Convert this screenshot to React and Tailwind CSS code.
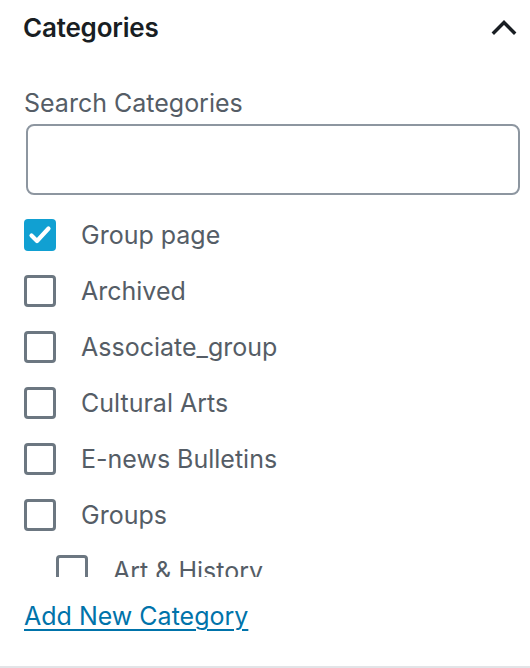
import React from "react";

const items = [
  { label: "Group page", checked: true },
  { label: "Archived" },
  { label: "Associate_group" },
  { label: "Cultural Arts" },
  { label: "E-news Bulletins" },
  { label: "Groups" },
  { label: "Art & History", nested: true },
  { label: "Education", nested: true },
];

function Box({ checked }) {
  if (checked) {
    return (
      <span className="flex h-[32px] w-[32px] shrink-0 items-center justify-center rounded-[4px] bg-[#11a0d2]">
        <svg width="26" height="26" viewBox="0 0 26 26" fill="none">
          <path d="M4.5 13.5l5.5 5.5L21.5 6.5" stroke="#fff" strokeWidth="4.2" strokeLinecap="round" strokeLinejoin="round" />
        </svg>
      </span>
    );
  }
  return <span className="block h-[32px] w-[32px] shrink-0 rounded-[4px] border-[3px] border-[#6c7781] bg-white" />;
}

export default function App() {
  return (
    <div className="h-[668px] w-[530px] overflow-hidden border-b-2 border-[#e2e4e7] bg-white font-['Inter',sans-serif]">
      <div className="flex h-[56px] items-center justify-between pl-[23px] pr-[12px]">
        <span className="text-[26px] font-semibold leading-none tracking-[-0.2px] text-[#191e23]">Categories</span>
        <svg width="28" height="28" viewBox="0 0 28 28" fill="none">
          <path d="M4 18.5l10-10 10 10" stroke="#191e23" strokeWidth="3.4" strokeLinecap="square" />
        </svg>
      </div>
      <div className="pl-[24px] pr-[10px]">
        <div className="mt-[33px] text-[25px] leading-[28px] text-[#555d66]">Search Categories</div>
        <div className="ml-[2px] mt-[7px] h-[71px] w-[494px] rounded-[8px] border-2 border-[#8d96a0] bg-white" />
        <div className="mt-[12px] h-[370px] overflow-hidden">
          {items.map((it) => (
            <div
              key={it.label}
              className={`flex h-[56px] items-center ${it.nested ? "pl-[32px]" : ""}`}
            >
              <Box checked={it.checked} />
              <span className="ml-[25px] text-[25px] leading-none text-[#555d66]">{it.label}</span>
            </div>
          ))}
        </div>
        <a href="#" className="mt-[23px] block text-[25px] leading-[32px] text-[#0073aa] underline decoration-[2px] underline-offset-[4px]">
          Add New Category
        </a>
      </div>
    </div>
  );
}
